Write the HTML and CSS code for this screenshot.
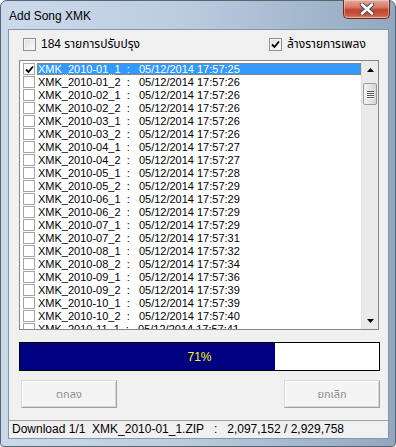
FILE: index.html
```html
<!DOCTYPE html>
<html lang="th">
<head>
    <meta charset="UTF-8">
    <title>Add Song XMK</title>
    <link rel="stylesheet" href="styles.css">
</head>
<body>
    <div class="window">
        <div class="titlebar">
            <span class="title">Add Song XMK</span>
            <div class="close">
                <svg width="18" height="12" viewBox="0 0 18 12">
                    <path d="M4 1.5 L14 10.5 M14 1.5 L4 10.5" stroke="#3b4a5a" stroke-width="4.4" stroke-linecap="round"/>
                    <path d="M4 1.5 L14 10.5 M14 1.5 L4 10.5" stroke="#fff" stroke-width="2.6" stroke-linecap="round"/>
                </svg>
            </div>
        </div>
        <div class="client">
            <div class="options">
                <label class="opt"><span class="cb"></span>184 รายการปรับปรุง</label>
                <label class="opt opt-right"><span class="cb"><svg width="9" height="9" viewBox="0 0 9 9"><path d="M1 4.5 L3.5 7 L8 1.5" stroke="#000" stroke-width="1.8" fill="none"/></svg></span>ล้างรายการเพลง</label>
            </div>
            <div class="listbox">
                <ul class="items">
                    <li class="row selected"><span class="rcb"><svg width="9" height="9" viewBox="0 0 9 9"><path d="M1 4.5 L3.5 7 L8 1.5" stroke="#000" stroke-width="1.8" fill="none"/></svg></span><span class="txt">XMK_2010-01_1  :   05/12/2014 17:57:25</span></li>
                    <li class="row"><span class="rcb"></span><span class="txt">XMK_2010-01_2  :   05/12/2014 17:57:26</span></li>
                    <li class="row"><span class="rcb"></span><span class="txt">XMK_2010-02_1  :   05/12/2014 17:57:26</span></li>
                    <li class="row"><span class="rcb"></span><span class="txt">XMK_2010-02_2  :   05/12/2014 17:57:26</span></li>
                    <li class="row"><span class="rcb"></span><span class="txt">XMK_2010-03_1  :   05/12/2014 17:57:26</span></li>
                    <li class="row"><span class="rcb"></span><span class="txt">XMK_2010-03_2  :   05/12/2014 17:57:26</span></li>
                    <li class="row"><span class="rcb"></span><span class="txt">XMK_2010-04_1  :   05/12/2014 17:57:27</span></li>
                    <li class="row"><span class="rcb"></span><span class="txt">XMK_2010-04_2  :   05/12/2014 17:57:27</span></li>
                    <li class="row"><span class="rcb"></span><span class="txt">XMK_2010-05_1  :   05/12/2014 17:57:28</span></li>
                    <li class="row"><span class="rcb"></span><span class="txt">XMK_2010-05_2  :   05/12/2014 17:57:29</span></li>
                    <li class="row"><span class="rcb"></span><span class="txt">XMK_2010-06_1  :   05/12/2014 17:57:29</span></li>
                    <li class="row"><span class="rcb"></span><span class="txt">XMK_2010-06_2  :   05/12/2014 17:57:29</span></li>
                    <li class="row"><span class="rcb"></span><span class="txt">XMK_2010-07_1  :   05/12/2014 17:57:29</span></li>
                    <li class="row"><span class="rcb"></span><span class="txt">XMK_2010-07_2  :   05/12/2014 17:57:31</span></li>
                    <li class="row"><span class="rcb"></span><span class="txt">XMK_2010-08_1  :   05/12/2014 17:57:32</span></li>
                    <li class="row"><span class="rcb"></span><span class="txt">XMK_2010-08_2  :   05/12/2014 17:57:34</span></li>
                    <li class="row"><span class="rcb"></span><span class="txt">XMK_2010-09_1  :   05/12/2014 17:57:36</span></li>
                    <li class="row"><span class="rcb"></span><span class="txt">XMK_2010-09_2  :   05/12/2014 17:57:39</span></li>
                    <li class="row"><span class="rcb"></span><span class="txt">XMK_2010-10_1  :   05/12/2014 17:57:39</span></li>
                    <li class="row"><span class="rcb"></span><span class="txt">XMK_2010-10_2  :   05/12/2014 17:57:40</span></li>
                    <li class="row"><span class="rcb"></span><span class="txt">XMK_2010-11_1  :   05/12/2014 17:57:41</span></li>
                </ul>
                <div class="scrollbar">
                    <div class="sb-btn"><svg width="7" height="4" viewBox="0 0 7 4"><path d="M0 4 L3.5 0 L7 4 Z" fill="#000"/></svg></div>
                    <div class="sb-track">
                        <div class="sb-thumb"><span></span><span></span><span></span><span></span></div>
                    </div>
                    <div class="sb-btn"><svg width="7" height="4" viewBox="0 0 7 4"><path d="M0 0 L7 0 L3.5 4 Z" fill="#000"/></svg></div>
                </div>
            </div>
            <div class="progress">
                <div class="fill" style="width:71%"></div>
                <span class="pct">71%</span>
            </div>
            <div class="buttons">
                <button class="btn" disabled>ตกลง</button>
                <button class="btn" disabled>ยกเลิก</button>
            </div>
            <div class="status">Download 1/1  XMK_2010-01_1.ZIP   :   2,097,152 / 2,929,758</div>
        </div>
    </div>
</body>
</html>
```

FILE: styles.css
```css
*{
    margin: 0;
    padding: 0;
    box-sizing: border-box;
}
body{
    width: 396px;
    height: 447px;
    font-family: "Liberation Sans", Tahoma, "Noto Sans Thai", sans-serif;
    font-size: 11px;
    color: #000;
    background: #fff;
}
.window{
    width: 396px;
    height: 447px;
    padding: 0 6px 7px 7px;
    border: 1px solid #5a6572;
    border-radius: 7px 7px 4px 4px;
    background: linear-gradient(to right, #cbdaeb 0%, #bccde0 45%, #a5b9ce 75%, #93a8bf 100%);
    display: flex;
    flex-direction: column;
}
.titlebar{
    height: 28px;
    display: flex;
    align-items: flex-start;
    justify-content: space-between;
}
.title{
    font-size: 12px;
    margin: 8px 0 0 1px;
    color: #000;
}
.close{
    width: 47px;
    height: 19px;
    margin-top: -1px;
    margin-right: -1px;
    border: 1px solid #6b2c22;
    border-top: none;
    border-radius: 0 0 5px 5px;
    background: linear-gradient(to bottom, #e6a899 0%, #d47a66 40%, #c2432c 55%, #c85a40 85%, #de8f78 100%);
    box-shadow: inset 0 0 0 1px rgba(255,255,255,0.35);
    display: flex;
    align-items: center;
    justify-content: center;
}
.client{
    flex: 1;
    border: 1px solid #8496ab;
    background: #f0f0f0;
    display: flex;
    flex-direction: column;
}
.options{
    display: flex;
    height: 13px;
    margin-top: 8px;
    padding-left: 14px;
}
.opt{
    display: flex;
    align-items: center;
    gap: 5px;
    font-size: 12px;
    line-height: 13px;
    width: 246px;
}
.opt-right{
    width: auto;
}
.cb{
    width: 13px;
    height: 13px;
    border: 1px solid #8f8f8f;
    background: linear-gradient(to bottom right, #dcdcdc, #fbfbfb);
    box-shadow: inset 0 0 0 1px #f4f4f4;
    display: flex;
    align-items: center;
    justify-content: center;
}
.listbox{
    display: flex;
    height: 270px;
    margin: 9px 9px 0 10px;
    border: 1px solid #828790;
    background: #fff;
}
.items{
    flex: 1;
    list-style: none;
    padding-top: 1px;
    overflow: hidden;
}
.row{
    height: 13px;
    padding-top: 1px;
    display: flex;
    align-items: flex-start;
}
.rcb{
    width: 12px;
    height: 12px;
    margin-left: 3px;
    border: 1px solid #a4a4a4;
    background: #fff;
    display: flex;
    align-items: center;
    justify-content: center;
}
.txt{
    flex: 1;
    height: 12px;
    margin-left: 2px;
    padding-left: 1px;
    line-height: 12px;
    white-space: pre;
}
.selected .txt{
    background: #3399ff;
    color: #fff;
    outline: 1px dotted #c47a14;
    outline-offset: -1px;
}
.scrollbar{
    width: 17px;
    display: flex;
    flex-direction: column;
    background: #eaeaea;
    border-left: 1px solid #e0e0e0;
}
.sb-btn{
    height: 17px;
    display: flex;
    align-items: center;
    justify-content: center;
}
.sb-track{
    flex: 1;
    padding-top: 5px;
}
.sb-thumb{
    height: 22px;
    margin: 0 1px;
    border: 1px solid #9a9a9a;
    border-radius: 2px;
    background: linear-gradient(to right, #f3f3f3, #e2e2e2 60%, #d6d6d6);
    display: flex;
    flex-direction: column;
    align-items: center;
    justify-content: center;
    gap: 1px;
}
.sb-thumb span{
    width: 7px;
    height: 1px;
    background: #555;
    box-shadow: 0 1px 0 #fff;
}
.progress{
    display: grid;
    height: 29px;
    margin: 12px 8px 0 10px;
    border: 1px solid #000;
    background: #fff;
}
.fill,.pct{
    grid-area: 1 / 1;
}
.fill{
    background: #000080;
}
.pct{
    align-self: center;
    justify-self: center;
    color: #ffff00;
    font-size: 12px;
}
.buttons{
    display: flex;
    justify-content: space-between;
    margin: 9px 8px 0 12px;
}
.btn{
    width: 96px;
    height: 28px;
    font-family: Tahoma, "Noto Sans Thai", "Liberation Sans", sans-serif;
    font-size: 11px;
    color: #8d8d8d;
    background: #f4f4f4;
    border: 1px solid;
    border-color: #dadada #a0a0a0 #a0a0a0 #dadada;
    box-shadow: inset 1px 1px 0 #fff, inset -1px -1px 0 #d8d8d8;
}
.status{
    margin-top: auto;
    height: 18px;
    border-top: 1px solid #a0a0a0;
    padding-left: 3px;
    font-size: 12px;
    line-height: 17px;
    white-space: pre;
}
```
